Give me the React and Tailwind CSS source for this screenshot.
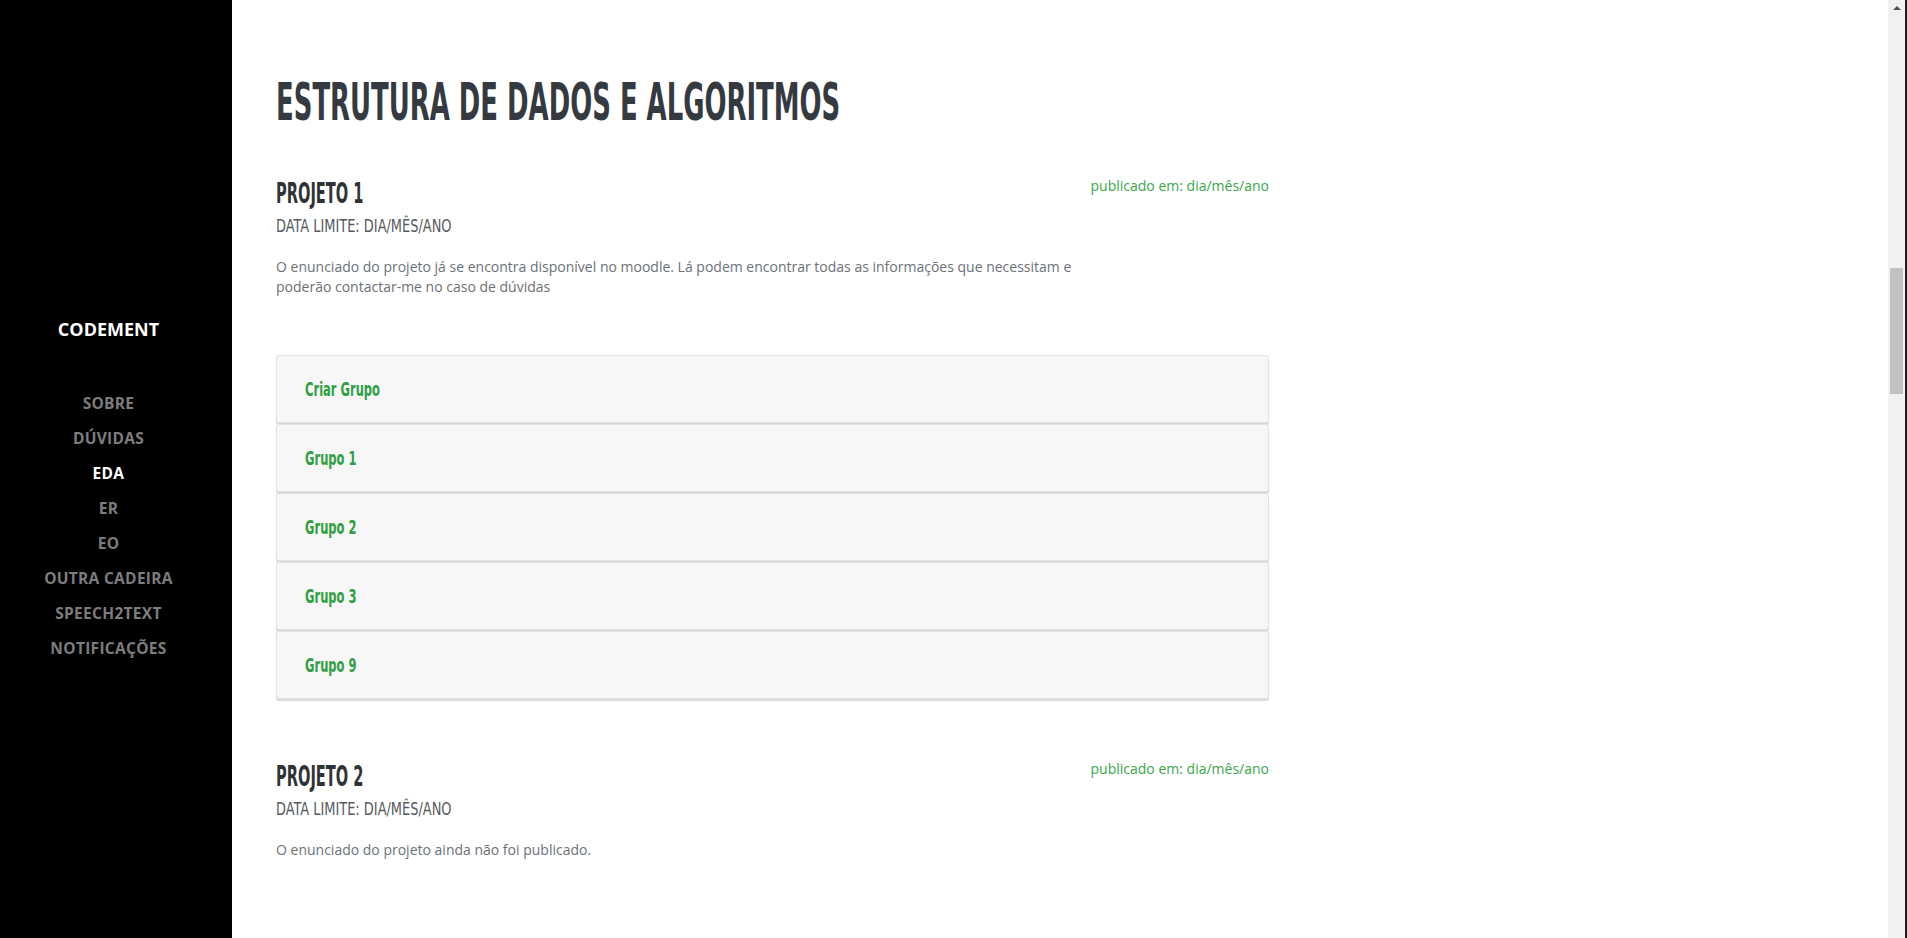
import { useState } from 'react';

// Página da cadeira EDA — barra lateral + lista de projetos
const NAV = ['SOBRE', 'DÚVIDAS', 'EDA', 'ER', 'EO', 'OUTRA CADEIRA', 'SPEECH2TEXT', 'NOTIFICAÇÕES'];
const GRUPOS = ['Criar Grupo', 'Grupo 1', 'Grupo 2', 'Grupo 3', 'Grupo 9'];

const cond = { fontFamily: '"DejaVu Sans Condensed", "DejaVu Sans", sans-serif' };
const body = { fontFamily: '"Open Sans", sans-serif' };

function Projeto({ titulo, texto, children }) {
  return (
    <section>
      <div className="flex justify-between items-start">
        <div>
          <h2 className="text-[28px] leading-[34px] font-bold text-[#2f3336]" style={cond}>
            <span className="inline-block origin-left scale-x-[0.58]">{titulo}</span>
          </h2>
          <p className="mt-[3px] text-[18px] leading-[24px] text-[#555a5e]" style={cond}>
            <span className="inline-block origin-left scale-x-[0.8]">DATA LIMITE: DIA/MÊS/ANO</span>
          </p>
        </div>
        <span className="mt-[-2px] text-[14px] text-[#3aa64a]" style={body}>publicado em: dia/mês/ano</span>
      </div>
      <p className="mt-[19px] max-w-[820px] text-[14px] leading-[20px] text-[#6c7177]" style={body}>
        {texto}
      </p>
      {children}
    </section>
  );
}

export default function App() {
  const [ativo, setAtivo] = useState('EDA');

  return (
    <div className="flex h-screen overflow-hidden bg-white">
      <aside className="w-[232px] shrink-0 bg-black flex flex-col items-center justify-center pr-[15px] pt-[38px]">
        <div className="text-[18px] font-bold text-white mb-[48px]" style={body}>
          CODEMENT
        </div>
        <nav className="flex flex-col items-center gap-[11px]">
          {NAV.map((item) => (
            <button
              key={item}
              onClick={() => setAtivo(item)}
              className={`text-[15.5px] leading-[24px] font-bold tracking-[0.3px] ${
                item === ativo ? 'text-white' : 'text-[#7d7d7d]'
              }`}
              style={body}
            >
              {item}
            </button>
          ))}
        </nav>
      </aside>

      <main className="flex-1 pl-[44px] pt-[74px]">
        <div className="w-[993px]">
          <h1 className="text-[52px] leading-[56px] font-bold text-[#343a40] whitespace-nowrap" style={cond}>
            <span className="inline-block origin-left scale-x-[0.554]">ESTRUTURA DE DADOS E ALGORITMOS</span>
          </h1>

          <div className="mt-[47px]">
            <Projeto
              titulo="PROJETO 1"
              texto="O enunciado do projeto já se encontra disponível no moodle. Lá podem encontrar todas as informações que necessitam e poderão contactar-me no caso de dúvidas"
            >
              <div className="mt-[58px] flex flex-col gap-[1px]">
                {GRUPOS.map((g) => (
                  <div
                    key={g}
                    className="h-[68px] flex items-center px-[28px] bg-[#f7f7f7] border border-[#e2e2e2] rounded-[3px] shadow-[0_2px_1px_#d8d8d8] cursor-pointer"
                  >
                    <span className="text-[20px] font-bold text-[#2ea043]" style={cond}>
                      <span className="inline-block origin-left scale-x-[0.64]">{g}</span>
                    </span>
                  </div>
                ))}
              </div>
            </Projeto>
          </div>

          <div className="mt-[61px]">
            <Projeto titulo="PROJETO 2" texto="O enunciado do projeto ainda não foi publicado." />
          </div>
        </div>
      </main>

      <div className="w-[17px] shrink-0 bg-[#f1f1f1] flex flex-col items-center">
        <div className="mt-[6px] w-0 h-0 border-l-[4px] border-r-[4px] border-b-[4px] border-l-transparent border-r-transparent border-b-[#505050]" />
        <div className="mt-[258px] w-[13px] h-[126px] bg-[#c1c1c1]" />
      </div>
      <div className="w-[2px] shrink-0 bg-[#1e1e1e]" />
    </div>
  );
}
